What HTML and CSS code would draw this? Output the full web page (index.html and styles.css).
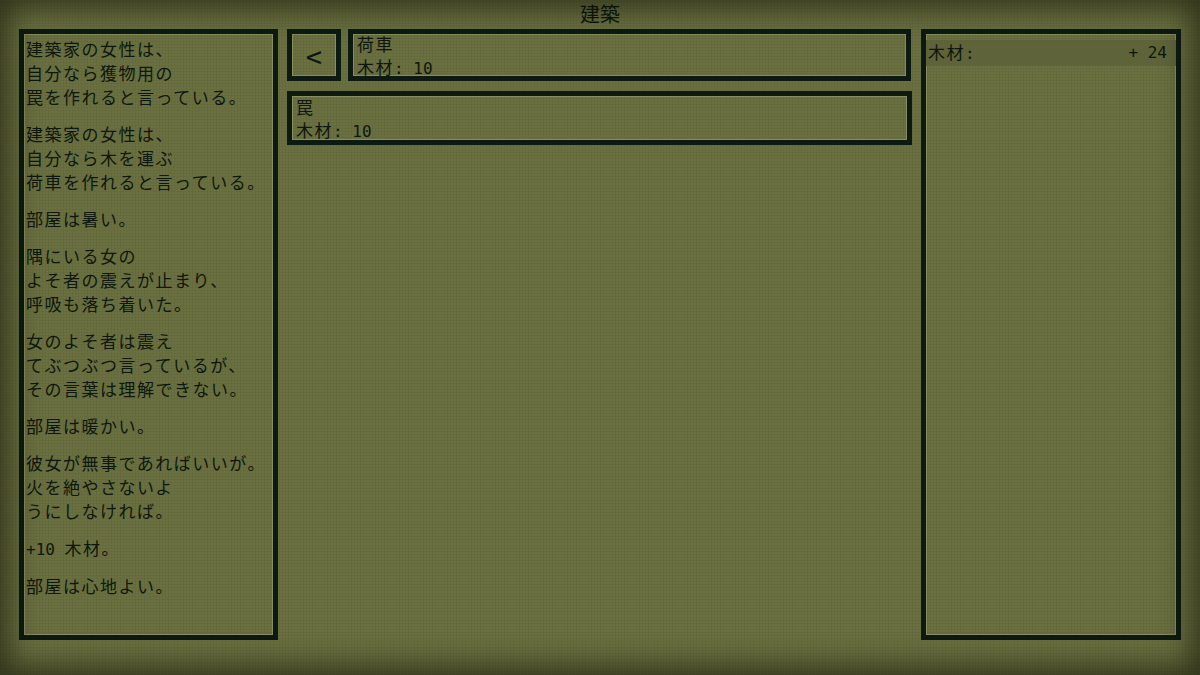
FILE: index.html
```html
<!DOCTYPE html>
<html lang="ja">
<head>
<meta charset="utf-8">
<title>建築</title>
<link rel="stylesheet" href="styles.css">
</head>
<body>
<div class="screen">
  <header class="title">建築</header>
  <main class="layout">
    <section class="panel log">
      <p>建築家の女性は、<br>自分なら獲物用の<br>罠を作れると言っている。</p>
      <p>建築家の女性は、<br>自分なら木を運ぶ<br>荷車を作れると言っている。</p>
      <p>部屋は暑い。</p>
      <p>隅にいる女の<br>よそ者の震えが止まり、<br>呼吸も落ち着いた。</p>
      <p>女のよそ者は震え<br>てぶつぶつ言っているが、<br>その言葉は理解できない。</p>
      <p>部屋は暖かい。</p>
      <p>彼女が無事であればいいが。<br>火を絶やさないよ<br>うにしなければ。</p>
      <p><span class="lat">+10 </span>木材。</p>
      <p>部屋は心地よい。</p>
    </section>
    <section class="middle">
      <div class="row">
        <div class="panel back">&lt;</div>
        <div class="panel card grow">
          <div>荷車</div>
          <div>木材<span class="lat">: 10</span></div>
        </div>
      </div>
      <div class="panel card">
        <div>罠</div>
        <div>木材<span class="lat">: 10</span></div>
      </div>
    </section>
    <section class="panel store">
      <div class="store-row"><span>木材<span class="lat">:</span></span><span class="lat">+ 24</span></div>
    </section>
  </main>
  <div class="vignette"></div>
</div>
</body>
</html>
```
FILE: styles.css
```css
html, body {
  margin: 0;
  padding: 0;
}
body {
  width: 1200px;
  height: 675px;
  overflow: hidden;
  background: #6a7040;
  color: #0e170e;
  font-family: "DejaVu Sans Mono", "Noto Sans CJK JP", monospace;
}
.screen {
  position: relative;
  width: 1200px;
  height: 675px;
  background-color: #6a7040;
  background-image:
    repeating-linear-gradient(0deg, rgba(0,0,0,0.04) 0 1px, transparent 1px 3px),
    repeating-linear-gradient(90deg, rgba(0,0,0,0.04) 0 1px, transparent 1px 3px);
  display: flex;
  flex-direction: column;
}
.title {
  height: 29px;
  line-height: 28px;
  text-align: center;
  font-size: 20px;
  font-family: "Noto Sans CJK JP", sans-serif;
}
.layout {
  display: grid;
  grid-template-columns: 259px 625px 260px;
  column-gap: 9px;
  padding: 0 18px 0 19px;
  height: 611px;
}
.panel {
  border: 5px solid #0d1a12;
  box-shadow: inset 0 0 0 1px rgba(190, 200, 150, 0.35);
  box-sizing: border-box;
}
.log {
  padding: 4px 4px 0 2px;
  font-size: 17px;
  line-height: 24px;
  letter-spacing: 1.5px;
}
.log p {
  margin: 0 0 13px 0;
  white-space: nowrap;
}
.lat {
  letter-spacing: 0;
  font-size: 16px;
}
.middle {
  display: flex;
  flex-direction: column;
  gap: 10px;
}
.row {
  display: flex;
  gap: 7px;
}
.back {
  width: 54px;
  height: 52px;
  display: flex;
  align-items: center;
  justify-content: center;
  font-size: 27px;
  font-family: "DejaVu Sans Mono", monospace;
  padding-top: 2px;
}
.card {
  height: 54px;
  padding: 1px 4px;
  font-size: 17px;
  line-height: 23px;
  letter-spacing: 1.5px;
}
.grow {
  flex: 1;
  height: 52px;
  padding-top: 0;
  margin-right: 1px;
}
.store {
  padding: 6px 0 0 0;
}
.store-row {
  display: flex;
  justify-content: space-between;
  height: 26px;
  line-height: 26px;
  font-size: 17px;
  letter-spacing: 1.5px;
  background: #5e6339;
  padding: 0 9px 0 2px;
}
.vignette {
  position: absolute;
  inset: 0;
  pointer-events: none;
  box-shadow: inset 0 0 30px 8px rgba(10, 12, 0, 0.6);
}
```
